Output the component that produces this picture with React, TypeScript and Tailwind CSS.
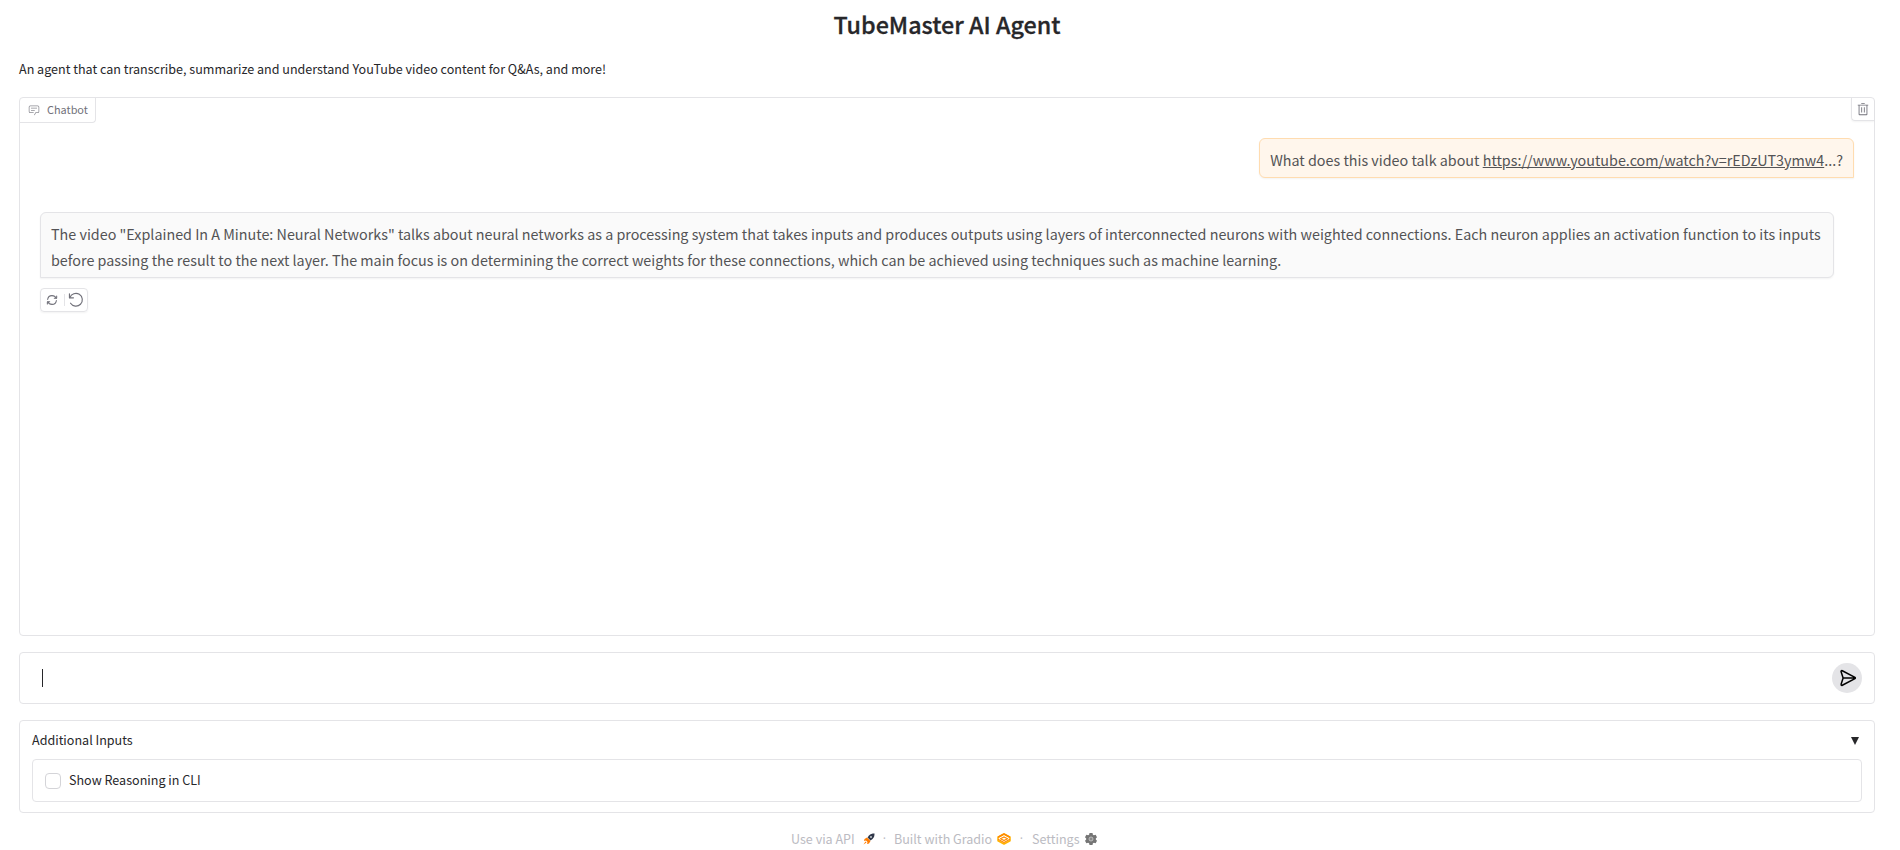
import React from 'react';

function ChatIcon() {
  return (
    <svg viewBox="0 0 32 32" className="size-3 shrink-0 opacity-80" fill="currentColor">
      <path d="M17.74 30L16 29l4-7h6a2 2 0 0 0 2-2V8a2 2 0 0 0-2-2H6a2 2 0 0 0-2 2v12a2 2 0 0 0 2 2h9v2H6a4 4 0 0 1-4-4V8a4 4 0 0 1 4-4h20a4 4 0 0 1 4 4v12a4 4 0 0 1-4 4h-4.84Z" />
      <path d="M8 10h16v2H8zm0 6h10v2H8z" />
    </svg>
  );
}

function TrashIcon() {
  return (
    <svg viewBox="0 0 32 32" className="size-[14px]" fill="currentColor">
      <path d="M12 12h2v12h-2zm6 0h2v12h-2z" />
      <path d="M4 6v2h2v20a2 2 0 0 0 2 2h16a2 2 0 0 0 2-2V8h2V6zm4 22V8h16v20zm4-26h8v2h-8z" />
    </svg>
  );
}

function RetryIcon() {
  return (
    <svg viewBox="0 0 24 24" className="mx-px size-[14px]" fill="none" stroke="currentColor" strokeWidth="1.800" strokeLinecap="round" strokeLinejoin="round">
      <path d="M19.1679 9C18.0247 6.46819 15.3006 4.5 11.9999 4.5C8.31459 4.5 5.05104 7.44668 4.54932 11" />
      <path d="M16 9H19.4C19.7314 9 20 8.73137 20 8.4V5" />
      <path d="M4.88146 15C5.92458 17.5318 8.64874 19.5 12.0494 19.5C15.7347 19.5 18.9983 16.5533 19.5 13" />
      <path d="M8.04932 15H4.64932C4.31795 15 4.04932 15.2686 4.04932 15.6V19" />
    </svg>
  );
}

function UndoIcon() {
  return (
    <svg viewBox="1 1 22 22" className="size-4" fill="none" stroke="currentColor" strokeWidth="1.600" strokeLinecap="round" strokeLinejoin="round">
      <path d="M3 3.500V9h5.500" />
      <path d="M3.600 8.700a8.800 8.800 0 1 1 .9 7.700" />
    </svg>
  );
}

function SendIcon() {
  return (
    <svg viewBox="0 0 22 24" className="size-[18px]" fill="none" stroke="#000" strokeWidth="2" strokeLinejoin="round" strokeLinecap="round">
      <path d="M20.3 11.2 3.4 2.3c-1-.5-2 .3-1.6 1.4L4.5 12l-2.7 8.3c-.4 1.1.6 1.9 1.6 1.4l16.9-8.9c.6-.4.6-1.2 0-1.6ZM4.5 12H19" />
    </svg>
  );
}

function RocketIcon() {
  return (
    <svg viewBox="0 0 24 24" className="h-3 w-3">
      <path d="M23 1c-5 0-8 1-11 4L9 9l6 6 4-3c3-3 4-6 4-11Z" fill="#30384a" />
      <circle cx="16" cy="8" r="2" fill="#c8ccd2" />
      <path d="M8 9 3 12l-1 4 4-1 3 3-1 4 4-1 3-5-7-7Z" fill="#ff7c00" />
      <path d="M5 17 1 23l6-4Z" fill="#ff7c00" />
    </svg>
  );
}

function GradioIcon() {
  return (
    <svg viewBox="0 0 28 24" className="h-3 w-[14px]" fill="none" strokeWidth="3" strokeLinejoin="round">
      <path d="M14 2 2 8.500v7L14 22l12-6.500v-7Z" stroke="#ffb300" />
      <path d="M2 8.500 14 2l12 6.500" stroke="#ff8a00" />
      <path d="M2 12.500 14 19l12-6.500" stroke="#ff8a00" strokeWidth="2.200" />
      <path d="M7 11.500 14 8l7 3.500-7 3.500Z" stroke="#ff8a00" strokeWidth="2.600" />
    </svg>
  );
}

function GearIcon() {
  return (
    <svg viewBox="0 0 24 24" className="size-3">
      <path
        fill="#757575"
        d="M9 0h6l.8 3.600 2 1.100L21.300 3.500l2.700 5.200L21.600 11v2l2.400 2.300-2.700 5.200-3.500-1.200-2 1.100L15 24H9l-.8-3.600-2-1.100-3.500 1.200L0 15.300 2.400 13v-2L0 8.700l2.700-5.200 3.500 1.200 2-1.100Z"
      />
      <circle cx="12" cy="12" r="4" fill="#8a8a8a" stroke="#c4c4c4" strokeWidth="1.800" />
    </svg>
  );
}

export default function App() {
  return (
    <main className="h-[850px] w-[1900px] overflow-hidden bg-white pl-[19px] pr-[25px] font-['Noto_Sans_CJK_SC',sans-serif] text-[#27272a]">
      <h1 className="flex h-12 items-center justify-center text-[23.3px] leading-[30px] font-medium [-webkit-text-stroke:0.3px_#27272a]">TubeMaster AI Agent</h1>
      <p className="mt-2.5 h-[39px] text-[12.55px] leading-[21px]">
        An agent that can transcribe, summarize and understand YouTube video content for Q&amp;As, and more!
      </p>

      <section className="flex h-[539px] flex-col rounded border border-[#e4e4e7]">
        <div className="flex items-start justify-between">
          <div className="flex h-[25px] w-[76px] items-center gap-[7px] rounded-br border-r border-b border-[#e4e4e7] pl-2 text-[10.9px] text-[#71717a]">
            <ChatIcon />
            <span className="pb-0.5">Chatbot</span>
          </div>
          <button className="flex h-[23px] w-[23px] items-center justify-center rounded-bl border-b border-l border-[#e4e4e7] text-[#71717a] shadow-xs">
            <TrashIcon />
          </button>
        </div>
        <div className="mt-[15px] mr-5 h-10 self-end rounded-md rounded-br-none border border-[#ffdcb0] bg-[#fff6ec] px-2.5 pt-2 text-[14.33px] leading-[26px] text-[#535355] shadow-xs">
          What does this video talk about <a className="underline">https://www.youtube.com/watch?v=rEDzUT3ymw4</a>...?
        </div>
        <div className="mt-[34px] ml-5 h-[66px] w-[1794px] rounded-md rounded-bl-none border border-[#e4e4e7] bg-[#fafafa] px-2.5 pt-2 text-[14.33px] leading-[26px] whitespace-nowrap text-[#535355] shadow-xs">
          The video "Explained In A Minute: Neural Networks" talks about neural networks as a processing system that takes inputs and produces outputs using layers of interconnected neurons with weighted connections. Each neuron applies an activation function to its inputs
          <br />
          before passing the result to the next layer. The main focus is on determining the correct weights for these connections, which can be achieved using techniques such as machine learning.
        </div>
        <div className="mt-2.5 ml-5 flex h-6 w-12 items-center rounded border border-[#e4e4e7] pl-[3px] text-[#71717a] shadow-xs">
          <RetryIcon />
          <span className="mr-[3px] ml-1 h-3 w-px bg-[#e4e4e7]" />
          <UndoIcon />
        </div>
      </section>

      <section className="mt-4 flex h-[52px] items-center justify-between rounded border border-[#e4e4e7] pr-3 pl-[22px]">
        <span className="h-[18px] w-px bg-[#27272a]" />
        <button className="flex size-[30px] items-center justify-center rounded-full bg-[#e4e4e7] pl-0.5">
          <SendIcon />
        </button>
      </section>

      <section className="mt-4 h-[93px] rounded border border-[#e4e4e7] px-3 pt-2">
        <div className="flex h-[21px] items-center justify-between text-[12.55px] leading-[21px]">
          <span>Additional Inputs</span>
          <svg viewBox="0 0 8 8" className="mt-[3px] mr-[3px] size-2" fill="#27272a">
            <path d="M0 0h8L4 8Z" />
          </svg>
        </div>
        <label className="mt-[9px] flex h-[43px] items-center gap-2 rounded border border-[#e4e4e7] pl-3 text-[12.55px] leading-[21px]">
          <span className="size-4 rounded border border-[#d4d4d8]" />
          <span className="pb-0.5">Show Reasoning in CLI</span>
        </label>
      </section>

      <footer className="mt-[15px] flex h-[21px] items-center pl-[772px] text-[12.55px] leading-[21px] text-[#bbbbc2]">
        <span className="w-[72px]">Use via API</span>
        <RocketIcon />
        <span className="w-[19px] text-center font-['Open_Sans',sans-serif]">·</span>
        <span className="w-[103px]">Built with Gradio</span>
        <GradioIcon />
        <span className="w-[21px] text-center font-['Open_Sans',sans-serif]">·</span>
        <span className="w-[53px]">Settings</span>
        <GearIcon />
      </footer>
    </main>
  );
}
